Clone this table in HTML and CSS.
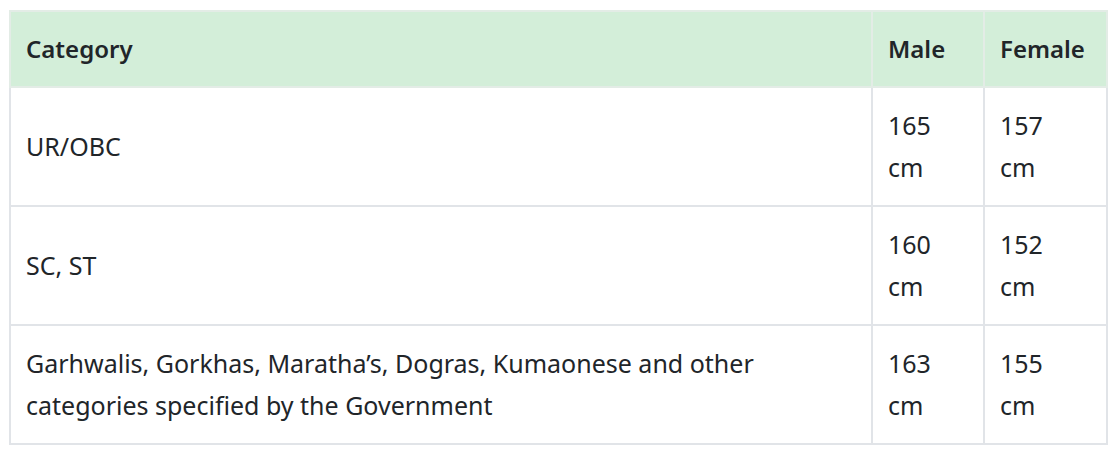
FILE: index.html
```html
<!DOCTYPE html>
<html lang="en">
<head>
<meta charset="utf-8">
<link rel="stylesheet" href="styles.css">
</head>
<body>
<table class="tbl">
  <colgroup>
    <col class="c-cat">
    <col class="c-male">
    <col class="c-female">
  </colgroup>
  <thead>
    <tr>
      <th>Category</th>
      <th>Male</th>
      <th>Female</th>
    </tr>
  </thead>
  <tbody>
    <tr>
      <td>UR/OBC</td>
      <td class="num">165 cm</td>
      <td class="num">157 cm</td>
    </tr>
    <tr>
      <td>SC, ST</td>
      <td class="num">160 cm</td>
      <td class="num">152 cm</td>
    </tr>
    <tr>
      <td>Garhwalis, Gorkhas, Maratha’s, Dogras, Kumaonese and other categories specified by the Government</td>
      <td class="num">163 cm</td>
      <td class="num">155 cm</td>
    </tr>
  </tbody>
</table>
</body>
</html>
```

FILE: styles.css
```css
html, body {
  margin: 0;
  padding: 0;
  background: #ffffff;
}
body {
  padding: 10px 3px 0 9px;
  font-family: "Noto Sans", "Open Sans", sans-serif;
  color: #212529;
}
.tbl {
  width: 1097px;
  border-collapse: collapse;
  table-layout: fixed;
  font-size: 25px;
  line-height: 42px;
}
.c-cat { width: 862px; }
.c-male { width: 112px; }
.c-female { width: 123px; }
.tbl th, .tbl td {
  border: 2px solid #e1e4e8;
  padding: 16px 17px 17px 15px;
  text-align: left;
  vertical-align: middle;
}
.tbl th {
  background: #d3eed9;
  font-weight: 600;
  font-size: 24px;
  line-height: 42px;
  padding-bottom: 16px;
  border-color: #e3ece6;
}
.tbl td {
  font-weight: 400;
}
.tbl td.num {
  padding-right: 30px;
}
```
